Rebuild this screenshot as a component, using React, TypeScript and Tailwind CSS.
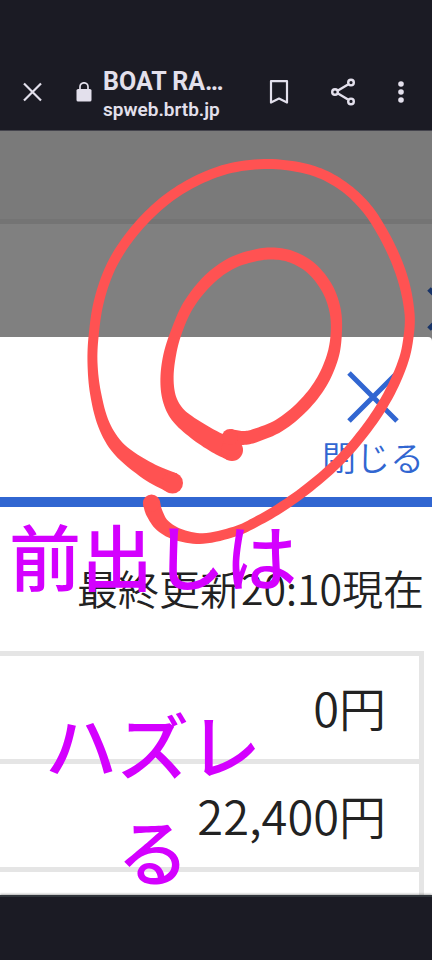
import React from "react";

type Dab = [x: number, y: number, r: number];

const OUTER_LOOP: Dab[] = [
  [172.5, 483, 10.5], [148, 471, 9], [119, 449, 7], [104, 425, 6], [95.5, 393, 5.5],
  [92.5, 363, 5], [93.5, 337, 5], [98.5, 303, 5], [109, 271, 5], [123, 246, 5],
  [143, 221, 5], [167, 199, 5], [195, 181.5, 5], [227, 169, 5], [264, 164, 5],
  [298, 167, 5], [323, 174.5, 5], [345, 187.5, 5], [363, 204, 5.3], [377, 223, 5.3],
  [393, 253, 5.3], [404, 283, 5.3], [409.5, 313, 5], [409, 333, 5], [404, 359, 5],
  [390, 392, 5.2], [370, 424, 5.2], [341, 459, 5], [309.5, 487, 5], [280, 508, 5],
  [252, 524, 5], [235, 531.5, 5], [203, 538.5, 5.3], [178, 534.5, 6.3], [162, 525, 7.3],
  [154, 512, 8.3], [151.5, 503, 8.6],
];

const INNER_LOOP: Dab[] = [
  [232, 450, 11], [217, 443, 10.5], [196, 430, 9.5], [178, 415, 8], [169.5, 399, 7],
  [167, 379, 6.6], [169.5, 356, 6.3], [176, 333, 5.6], [188.5, 305, 5.6], [209, 279.5, 5.8],
  [232, 263, 5.8], [257, 255, 6], [274, 253.5, 6], [292, 257, 6], [311, 268, 6],
  [327, 288, 6], [335, 310, 5.8], [336.3, 333, 5.6], [332.5, 357, 6], [321, 383, 6.2],
  [303, 406, 6.3], [279, 425.5, 6.5], [254, 436, 6.8], [243, 438, 7], [230, 437, 8],
];

/** Outline of a pressure-sensitive pen line through the given dabs. */
function penOutline(dabs: Dab[]) {
  const pts: Dab[] = [];
  const at = (i: number) => dabs[Math.max(0, Math.min(dabs.length - 1, i))];
  const dist = (a: Dab, b: Dab) => Math.hypot(b[0] - a[0], b[1] - a[1]);
  const tangent = (i: number, k: number) =>
    (at(i + 1)[k] - at(i - 1)[k]) / (dist(at(i - 1), at(i)) + dist(at(i), at(i + 1)));
  for (let i = 0; i < dabs.length - 1; i++) {
    const span = dist(at(i), at(i + 1));
    for (let s = 0; s < 8; s++) {
      const t = s / 8;
      const t2 = t * t;
      const t3 = t2 * t;
      pts.push(
        [0, 1, 2].map(
          (k) =>
            (2 * t3 - 3 * t2 + 1) * at(i)[k] +
            (t3 - 2 * t2 + t) * span * tangent(i, k) +
            (3 * t2 - 2 * t3) * at(i + 1)[k] +
            (t3 - t2) * span * tangent(i + 1, k),
        ) as Dab,
      );
    }
  }
  pts.push(dabs[dabs.length - 1]);
  const left: string[] = [];
  const right: string[] = [];
  pts.forEach(([x, y, r], i) => {
    const p = pts[Math.max(0, i - 1)];
    const n = pts[Math.min(pts.length - 1, i + 1)];
    const len = dist(p, n) || 1;
    const nx = (-(n[1] - p[1]) / len) * r;
    const ny = ((n[0] - p[0]) / len) * r;
    left.push(`${(x + nx).toFixed(2)} ${(y + ny).toFixed(2)}`);
    right.unshift(`${(x - nx).toFixed(2)} ${(y - ny).toFixed(2)}`);
  });
  return `M${left.join("L")}L${right.join("L")}Z`;
}

function PenLine({ dabs }: { dabs: Dab[] }) {
  const first = dabs[0];
  const last = dabs[dabs.length - 1];
  return (
    <g>
      <path d={penOutline(dabs)} />
      <circle cx={first[0]} cy={first[1]} r={first[2]} />
      <circle cx={last[0]} cy={last[1]} r={last[2]} />
    </g>
  );
}

function BrowserBar() {
  return (
    <header className="flex h-[131px] items-end border-b border-[#44444d] bg-[#1b1b24] pb-3 text-[#e3e0ec]">
      <div className="flex h-[52px] w-full items-center">
        <button type="button" aria-label="Close tab" className="ml-5 flex size-6 shrink-0 items-center justify-center">
          <svg viewBox="0 0 24 24" className="size-6" stroke="currentColor" strokeWidth="2.2" fill="none">
            <path d="M4 3.5L21 20.5M21 3.5L4 20.5" />
          </svg>
        </button>
        <svg viewBox="0 0 16 20" className="ml-8 h-5 w-4 shrink-0" fill="currentColor">
          <rect x="0.5" y="7" width="15" height="12.5" rx="1.6" />
          <path d="M4 8V4.8a4 4 0 0 1 8 0V8" fill="none" stroke="currentColor" strokeWidth="1.7" />
        </svg>
        <div className="ml-[11px] min-w-0 flex-1 pt-[6px] font-[Roboto,sans-serif] font-semibold">
          <div className="whitespace-nowrap text-[25px] font-bold leading-[30px]">BOAT RA…</div>
          <div className="whitespace-nowrap text-[19px] leading-[26px]">spweb.brtb.jp</div>
        </div>
        <button type="button" aria-label="Bookmark" className="mr-[38px] flex h-7 w-6 shrink-0 items-center justify-center">
          <svg viewBox="0 0 24 28" className="h-7 w-6" fill="none" stroke="currentColor" strokeWidth="2.2">
            <path d="M4 3.1H20V24.6L12 20.6L4 24.6Z" strokeLinejoin="round" />
          </svg>
        </button>
        <button type="button" aria-label="Share" className="mr-8 flex size-7 shrink-0 items-center justify-center">
          <svg viewBox="0 0 28 28" className="size-7" fill="none" stroke="currentColor" strokeWidth="2.4">
            <path d="M9 12.6L19 6.4M9 15.4L19 21.6" />
            <circle cx="6" cy="14" r="2.8" />
            <circle cx="22" cy="4.6" r="2.8" />
            <circle cx="22" cy="23.4" r="2.8" />
          </svg>
        </button>
        <button type="button" aria-label="More options" className="mr-[19px] flex h-7 w-6 shrink-0 items-center justify-center">
          <svg viewBox="0 0 24 28" className="h-7 w-6" fill="currentColor">
            <circle cx="12" cy="6" r="2.8" />
            <circle cx="12" cy="14" r="2.8" />
            <circle cx="12" cy="22" r="2.8" />
          </svg>
        </button>
      </div>
    </header>
  );
}

function DimmedPage() {
  return (
    <div className="overflow-hidden">
      <div className="h-[88px] bg-[#7a7a7a]" />
      <div className="flex h-[118px] justify-end border-t-[5px] border-[#747474] bg-[#808080] pt-[62px]">
        <svg viewBox="0 0 46 46" className="-mr-10 size-[46px] shrink-0" stroke="#183468" strokeWidth="5">
          <path d="M3 3L43 43M43 3L3 43" />
        </svg>
      </div>
    </div>
  );
}

function Sheet() {
  const amounts = ["0円", "22,400円"];
  return (
    <main className="min-h-0 flex-1 overflow-hidden rounded-tr bg-white font-[350] text-[#222]">
      <div className="flex h-[170px] justify-end border-b-[10px] border-[#3166d1] pr-2 pt-[34px]">
        <button type="button" className="flex h-[110px] flex-col items-center text-[34px] leading-[44px] text-[#3166d1]">
          <svg viewBox="0 0 52 52" className="mb-3 h-[52px] w-[52px] shrink-0" stroke="currentColor" strokeWidth="5">
            <path d="M2 2L50 50M50 2L2 50" />
          </svg>
          閉じる
        </button>
      </div>
      <p className="flex h-[144px] items-center justify-end whitespace-nowrap pb-4 pr-2 pt-8 text-[41px] leading-[60px]">
        最終更新20:10現在
      </p>
      <div className="pr-2">
        <table className="w-full border-collapse">
          <tbody>
            {amounts.map((amount) => (
              <tr key={amount} className="h-[108px] border-y-[5px] border-r-[5px] border-[#e5e5e5]">
                <td className="p-0 pb-[2px] pr-[33px] text-right text-[47px] leading-[72px]">{amount}</td>
              </tr>
            ))}
            <tr className="h-[108px] border-r-[5px] border-[#e5e5e5]">
              <td />
            </tr>
          </tbody>
        </table>
      </div>
    </main>
  );
}

function Annotations() {
  return (
    <div className="pointer-events-none absolute left-0 top-0 h-[960px] w-[432px]">
      <svg viewBox="0 0 432 960" className="absolute left-0 top-0 h-[960px] w-[432px]" fill="#ff5252">
        <PenLine dabs={OUTER_LOOP} />
        <PenLine dabs={INNER_LOOP} />
      </svg>
      <div className="absolute left-[9px] top-[501px] w-[288px] text-center text-[72px] font-medium leading-[106px] text-[#d400ff]">
        <p>前出しは</p>
        <p className="mt-[83px]">ハズレ</p>
        <p>る</p>
      </div>
    </div>
  );
}

export default function App() {
  return (
    <div className="relative flex h-screen flex-col overflow-hidden bg-[#808080] font-['Noto_Sans_CJK_JP',sans-serif]">
      <BrowserBar />
      <DimmedPage />
      <Sheet />
      <footer className="relative h-[65px] shrink-0 border-t-2 border-[#31363c] bg-[#1b1b24] shadow-[0_-1px_2px_#0000004d]" />
      <Annotations />
    </div>
  );
}
